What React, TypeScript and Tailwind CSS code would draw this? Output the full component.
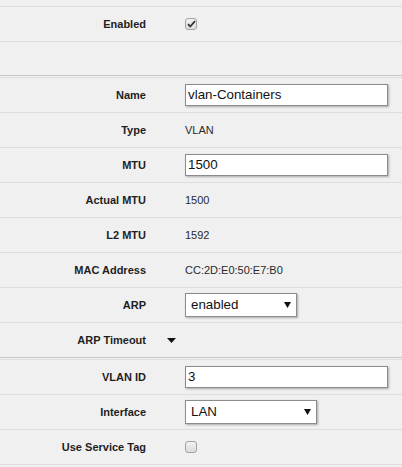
import type { ReactNode } from "react";

function Row({ label, children, h = "h-[35px]", last = false }: { label?: string; children?: ReactNode; h?: string; last?: boolean }) {
  return (
    <div className={`flex items-center ${h} border-b ${last ? "border-[#c8c8c8]" : "border-[#dddddd]"}`}>
      <div className="w-[146px] shrink-0 text-right text-[11px] font-bold text-[#1e1e1e]">{label}</div>
      <div className="ml-[39px] flex items-center flex-1 min-w-0">{children}</div>
    </div>
  );
}

function Value({ children }: { children: ReactNode }) {
  return <span className="text-[11px] text-[#2a2a2a]">{children}</span>;
}

function TextInput({ value }: { value: string }) {
  return (
    <div className="w-[203px] h-[22px] bg-white border border-[#8c8c8c] shadow-[1px_1px_2px_rgba(0,0,0,0.3)] flex items-center px-[2px] text-[13.33px] text-[#111]">
      {value}
    </div>
  );
}

function Select({ value, width }: { value: string; width: string }) {
  return (
    <div className={`${width} h-[24px] bg-white border border-[#8c8c8c] shadow-[1px_1px_2px_rgba(0,0,0,0.3)] flex items-center justify-between pl-[5px] pr-[5px] text-[13.33px] text-[#111]`}>
      <span>{value}</span>
      <svg width="7" height="6" viewBox="0 0 7 6">
        <path d="M0 0h7L3.5 6z" fill="#111" />
      </svg>
    </div>
  );
}

function Checkbox({ checked }: { checked?: boolean }) {
  return (
    <span className="w-[12px] h-[12px] rounded-[3px] border border-[#a3a3a3] bg-gradient-to-b from-[#f2f2f2] to-[#dcdcdc] flex items-center justify-center">
      {checked && (
        <svg width="9" height="8" viewBox="0 0 9 8">
          <path d="M1 4.2l2.2 2.3L8 1.2" stroke="#333" strokeWidth="1.8" fill="none" />
        </svg>
      )}
    </span>
  );
}

export default function App() {
  return (
    <div className="w-[402px] h-[467px] overflow-hidden bg-[#f0f0f0]" style={{ fontFamily: '"Liberation Sans", Arial, sans-serif' }}>
      {/* general */}
      <div className="h-[7px] border-b border-[#dddddd]" />
      <Row label="Enabled">
        <Checkbox checked />
      </Row>
      <Row h="h-[34px]" last />

      {/* interface */}
      <div className="mt-px border-t border-[#dddddd]">
        <Row label="Name">
          <TextInput value="vlan-Containers" />
        </Row>
        <Row label="Type">
          <Value>VLAN</Value>
        </Row>
        <Row label="MTU">
          <TextInput value="1500" />
        </Row>
        <Row label="Actual MTU">
          <Value>1500</Value>
        </Row>
        <Row label="L2 MTU">
          <Value>1592</Value>
        </Row>
        <Row label="MAC Address">
          <Value>CC:2D:E0:50:E7:B0</Value>
        </Row>
        <Row label="ARP">
          <Select value="enabled" width="w-[112px]" />
        </Row>
        <div className="flex items-center h-[35px] border-b border-[#c8c8c8]">
          <div className="w-[146px] shrink-0 text-right text-[11px] font-bold text-[#1e1e1e]">ARP Timeout</div>
          <svg className="ml-[21px]" width="9" height="5" viewBox="0 0 9 5">
            <path d="M0 0h9L4.5 5z" fill="#111" />
          </svg>
        </div>
      </div>

      {/* vlan */}
      <div className="mt-px border-t border-[#dddddd]">
        <Row label="VLAN ID">
          <TextInput value="3" />
        </Row>
        <Row label="Interface">
          <Select value="LAN" width="w-[132px]" />
        </Row>
        <Row label="Use Service Tag">
          <Checkbox />
        </Row>
      </div>
    </div>
  );
}
